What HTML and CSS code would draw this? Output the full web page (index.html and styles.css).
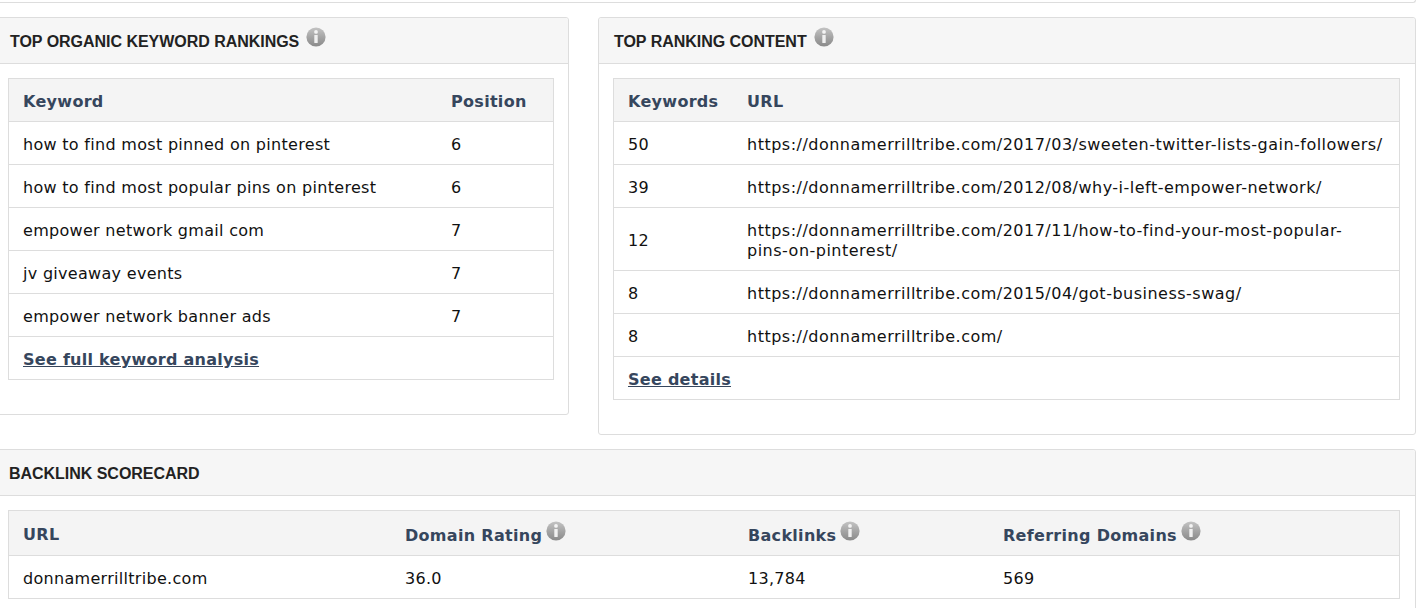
FILE: index.html
```html
<!DOCTYPE html>
<html lang="en">
<head>
<meta charset="utf-8">
<title>Report</title>
<link rel="stylesheet" href="styles.css">
</head>
<body>
<svg class="defs" width="0" height="0" aria-hidden="true">
  <defs>
    <linearGradient id="g" x1="0" y1="0" x2="0" y2="1">
      <stop offset="0" stop-color="#c4c4c4"/>
      <stop offset="0.55" stop-color="#a2a2a2"/>
      <stop offset="1" stop-color="#8a8a8a"/>
    </linearGradient>
    <symbol id="info" viewBox="0 0 20 20">
      <circle cx="10" cy="10" r="9.6" fill="url(#g)"/>
      <circle cx="10" cy="4.9" r="1.9" fill="#f4f4f4"/>
      <rect x="8.3" y="8" width="3.4" height="8" rx="0.6" fill="#f0f0f0"/>
    </symbol>
  </defs>
</svg>
<div class="page">
  <div class="topline"></div>
  <div class="columns">
    <section class="panel panel-left">
      <h2 class="panel-title title-left">TOP ORGANIC KEYWORD RANKINGS <svg class="info info-title"><use href="#info"/></svg></h2>
      <div class="panel-body body-left">
        <table class="data">
          <colgroup><col class="c-keyword"><col></colgroup>
          <thead><tr><th>Keyword</th><th>Position</th></tr></thead>
          <tbody>
            <tr><td>how to find most pinned on pinterest</td><td>6</td></tr>
            <tr><td>how to find most popular pins on pinterest</td><td>6</td></tr>
            <tr><td>empower network gmail com</td><td>7</td></tr>
            <tr><td>jv giveaway events</td><td>7</td></tr>
            <tr><td>empower network banner ads</td><td>7</td></tr>
            <tr><td colspan="2"><a class="more" href="#">See full keyword analysis</a></td></tr>
          </tbody>
        </table>
      </div>
    </section>
    <section class="panel panel-right">
      <h2 class="panel-title">TOP RANKING CONTENT <svg class="info info-title"><use href="#info"/></svg></h2>
      <div class="panel-body">
        <table class="data">
          <colgroup><col class="c-count"><col></colgroup>
          <thead><tr><th>Keywords</th><th>URL</th></tr></thead>
          <tbody>
            <tr><td>50</td><td class="url">https://donnamerrilltribe.com/2017/03/sweeten-twitter-lists-gain-followers/</td></tr>
            <tr><td>39</td><td class="url">https://donnamerrilltribe.com/2012/08/why-i-left-empower-network/</td></tr>
            <tr><td>12</td><td class="url">https://donnamerrilltribe.com/2017/11/how-to-find-your-most-popular-<br>pins-on-pinterest/</td></tr>
            <tr><td>8</td><td class="url">https://donnamerrilltribe.com/2015/04/got-business-swag/</td></tr>
            <tr><td>8</td><td class="url">https://donnamerrilltribe.com/</td></tr>
            <tr><td colspan="2"><a class="more" href="#">See details</a></td></tr>
          </tbody>
        </table>
      </div>
    </section>
  </div>
  <section class="panel panel-wide">
    <h2 class="panel-title">BACKLINK SCORECARD</h2>
    <div class="panel-body">
      <table class="data">
        <colgroup><col class="c-url"><col class="c-rating"><col class="c-links"><col></colgroup>
        <thead>
          <tr>
            <th>URL</th>
            <th>Domain Rating <svg class="info"><use href="#info"/></svg></th>
            <th>Backlinks <svg class="info"><use href="#info"/></svg></th>
            <th>Referring Domains <svg class="info"><use href="#info"/></svg></th>
          </tr>
        </thead>
        <tbody>
          <tr><td>donnamerrilltribe.com</td><td>36.0</td><td>13,784</td><td>569</td></tr>
        </tbody>
      </table>
    </div>
  </section>
</div>
</body>
</html>
```
FILE: styles.css
```css
html, body { margin: 0; padding: 0; background: #fff; overflow: hidden; height: 608px; }
body { font-family: "DejaVu Sans", Verdana, sans-serif; color: #111; }
.defs { position: absolute; }
.page { width: 1423px; margin-left: -7px; }
.topline { height: 2px; border: 1px solid #ddd; border-width: 0 1px 1px 0; border-radius: 0 0 3px 0; margin-bottom: 14px; }
.columns { display: flex; align-items: flex-start; gap: 29px; margin-bottom: 14px; }
.panel { border: 1px solid #ddd; border-radius: 3px; background: #fff; box-sizing: border-box; }
.panel-left { width: 576px; height: 398px; }
.panel-right { width: 818px; height: 418px; }
.panel-wide { width: 1423px; height: 200px; }
.panel-title { margin: 0; height: 45px; background: #f6f6f6; border-bottom: 1px solid #ddd; padding-left: 15px; font: bold 16px/48px "Liberation Sans", Arial, sans-serif; letter-spacing: -0.03px; color: #222; white-space: nowrap; border-radius: 3px 3px 0 0; }
.title-left { padding-left: 16px; }
.panel-body { padding: 14px 15px 0 14px; }
.body-left { padding-right: 14px; }
.data { width: 100%; border-collapse: collapse; table-layout: fixed; font-size: 16px; line-height: 20px; letter-spacing: 0.3px; }
.data th, .data td { border: 1px solid #ddd; border-width: 1px 0; padding: 13px 0 9px 14px; text-align: left; }
.data th { background: #f4f4f4; color: #36465d; font-weight: bold; }
.data tr > :first-child { border-left: 1px solid #ddd; }
.data tr > :last-child { border-right: 1px solid #ddd; }
.data .url { letter-spacing: 0.49px; }
.c-keyword { width: 428.5px; }
.c-count { width: 119.5px; }
.c-url { width: 382.5px; }
.c-rating { width: 343px; }
.c-links { width: 255px; }
.more { color: #36465d; font-weight: bold; letter-spacing: 0.27px; }
.info { width: 20px; height: 20px; margin-top: -3px; margin-left: -2px; vertical-align: baseline; }
.info-title { vertical-align: 0; margin-left: 2.5px; }
```
